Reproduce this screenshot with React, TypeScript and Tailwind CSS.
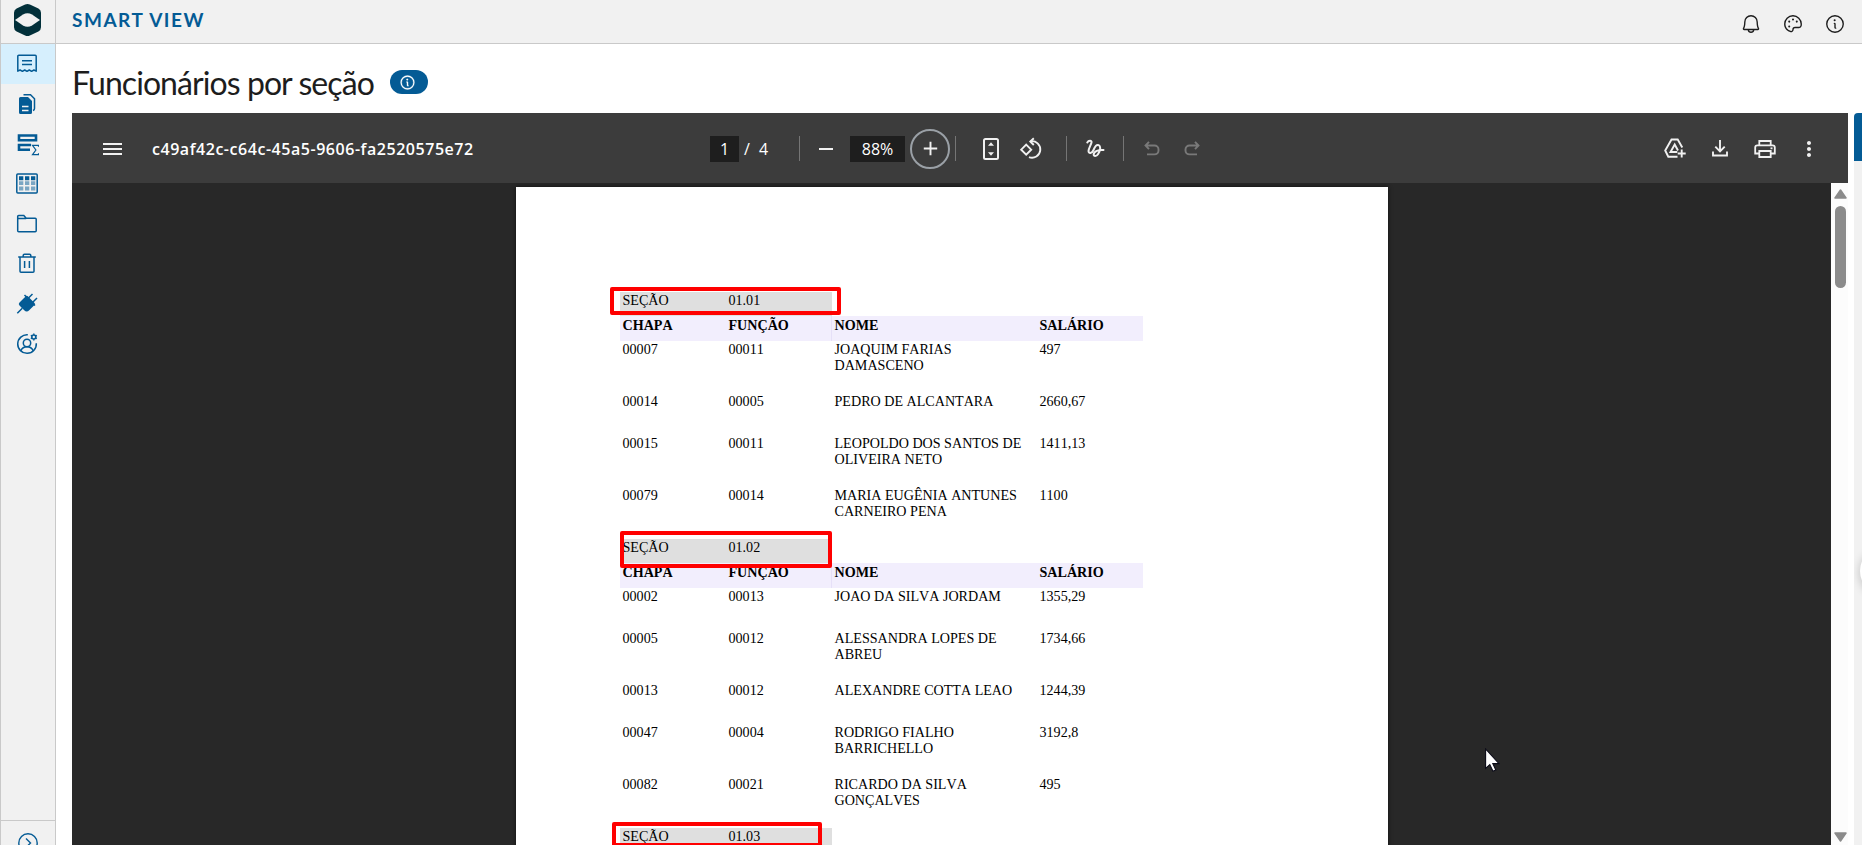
import type { ReactNode } from 'react'
import { MdAdd, MdMoreVert, MdRemove } from 'react-icons/md'
import { PiBell, PiInfo, PiPalette } from 'react-icons/pi'

type Employee = {
  id: string
  role: string
  name: string[]
  salary: string
}

type Section = {
  code: string
  employees: Employee[]
}

const sections: Section[] = [
  {
    code: '01.01',
    employees: [
      { id: '00007', role: '00011', name: ['JOAQUIM FARIAS', 'DAMASCENO'], salary: '497' },
      { id: '00014', role: '00005', name: ['PEDRO DE ALCANTARA'], salary: '2660,67' },
      { id: '00015', role: '00011', name: ['LEOPOLDO DOS SANTOS DE', 'OLIVEIRA NETO'], salary: '1411,13' },
      { id: '00079', role: '00014', name: ['MARIA EUGÊNIA ANTUNES', 'CARNEIRO PENA'], salary: '1100' },
    ],
  },
  {
    code: '01.02',
    employees: [
      { id: '00002', role: '00013', name: ['JOAO DA SILVA JORDAM'], salary: '1355,29' },
      { id: '00005', role: '00012', name: ['ALESSANDRA LOPES DE', 'ABREU'], salary: '1734,66' },
      { id: '00013', role: '00012', name: ['ALEXANDRE COTTA LEAO'], salary: '1244,39' },
      { id: '00047', role: '00004', name: ['RODRIGO FIALHO', 'BARRICHELLO'], salary: '3192,8' },
      { id: '00082', role: '00021', name: ['RICARDO DA SILVA', 'GONÇALVES'], salary: '495' },
    ],
  },
  { code: '01.03', employees: [] },
]

const Icon = ({ size = 24, children }: { size?: number; children: ReactNode }) => (
  <svg width={size} height={size} viewBox="0 0 24 24" fill="none" stroke="currentColor" strokeWidth="1.5" className="shrink-0">
    {children}
  </svg>
)

const sidebarIcons: ReactNode[] = [
  <Icon key="report">
    <path d="M2.800 19.200V4.300a1 1 0 0 1 1-1h16.400a1 1 0 0 1 1 1v14.900l-2.300-1.200-2.300 1.300-2.300-1.300-2.300 1.300-2.300-1.300-2.300 1.300-2.300-1.300z" strokeLinejoin="round" />
    <path d="M7 8.800h10M7 12.500h10" />
  </Icon>,
  <Icon key="files">
    <path d="M4 6.500a1.500 1.500 0 0 1 1.500-1.500H13l4 4v11.500a1.500 1.500 0 0 1-1.500 1.500h-10A1.500 1.500 0 0 1 4 20.500z" fill="currentColor" stroke="none" />
    <path d="M7 14.500h6.500M7 18.500h6.500" stroke="#f1f1f1" />
    <path d="M8.500 2.800H15.500l4 4v9.700a2 2 0 0 1-1.500 2" />
  </Icon>,
  <Icon key="totals">
    <path d="M4 3.500h17v4.700H4zM16 13H4v4.700h11" strokeWidth="2.600" />
    <path d="M23.500 14.800v-1.400h-6l3.400 4.600-3.400 4.600h6v-1.400" strokeWidth="1.200" />
  </Icon>,
  <Icon key="table">
    <rect x="1.800" y="2" width="20.400" height="19" rx="1" />
    <path d="M4 6.200h4.300M10 6.200h4.300M16 6.200h4.300" strokeWidth="4" />
    <path d="M4 11.200h4.300M10 11.200h4.300M16 11.200h4.300M4 16.500h4.300M10 16.500h4.300M16 16.500h4.300" strokeWidth="3.800" opacity=".5" />
  </Icon>,
  <Icon key="folder">
    <path d="M2.700 18.800V4.500a1 1 0 0 1 1-1h5.100l2.400 2.800h9a1 1 0 0 1 1 1v11.500a1 1 0 0 1-1 1H3.700a1 1 0 0 1-1-1zM2.700 6.500h8.500" />
  </Icon>,
  <Icon key="trash">
    <path d="M3.200 5h17.600M5 5v14.200a1 1 0 0 0 1 1h12a1 1 0 0 0 1-1V5M8.200 5V3.500a1.300 1.300 0 0 1 1.300-1.300h5A1.300 1.300 0 0 1 15.800 3.500v1.500M9.600 9v7M14.400 9v7" />
  </Icon>,
  <Icon key="plug">
    <path d="M4.500 10.500l6.300-6.300a1.500 1.500 0 0 1 2 0l6.700 6.700a1.500 1.500 0 0 1 0 2l-5.300 5.300a3.500 3.500 0 0 1-5 0l-4.700-4.700a2.100 2.100 0 0 1 0-3z" fill="currentColor" stroke="none" />
    <path d="M2.300 21.300l5-5M13.500 6l4-4M17.500 10.500L22 6M9.500 3l10.500 10.500" strokeWidth="1.500" />
  </Icon>,
  <Icon key="user">
    <path d="M12.800 2.800a9.300 9.300 0 1 0 8.500 8.500" />
    <circle cx="12" cy="11" r="3.700" />
    <path d="M5.700 18.800a7 7 0 0 1 12.600 0" />
    <circle cx="18.800" cy="5" r="2" strokeWidth="1.600" />
    <path d="M18.800 1.500v1.300M18.800 7.200v1.300M15.800 3.300l1.100.6M20.700 6.100l1.100.6M15.800 6.700l1.100-.6M20.700 3.900l1.100-.6" strokeWidth="1.400" />
  </Icon>,
]

const Sidebar = () => (
  <aside className="flex w-14 shrink-0 flex-col border-x border-[#c9c9c9] bg-[#f1f1f1] text-[#045b95]">
    <div className="flex h-11 shrink-0 justify-center border-b border-[#c9c9c9] pt-1">
      <svg width="27" height="32" viewBox="0 0 27 32" className="mr-[2px]">
        <path d="M13.500 0q1.200 0 2.400.6l8.500 4Q27 6 27 8.800v14.400q0 2.800-2.600 4.200l-8.500 4q-2.400 1.200-4.800 0l-8.500-4Q0 26 0 23.200V8.800Q0 6 2.600 4.600l8.500-4Q12.300 0 13.500 0z" fill="#02303a" />
        <path d="M1 16l8-5.500q4.500-2.600 9 0L26 16l-8 5.500q-4.500 2.600-9 0z" fill="#f1f1f1" />
      </svg>
    </div>
    {sidebarIcons.map((icon, i) => (
      <button key={i} className={`flex h-10 shrink-0 items-center justify-center pr-[2px] ${i === 0 ? 'bg-[#d6effd]' : ''}`}>
        {icon}
      </button>
    ))}
    <div className="mt-auto flex h-[25px] shrink-0 justify-center overflow-hidden border-t border-[#c9c9c9] pt-3">
      <svg width="20" height="20" viewBox="0 0 20 20" fill="none" stroke="currentColor" strokeWidth="1.400" className="shrink-0">
        <circle cx="10" cy="10" r="9.200" />
        <path d="M8 5.500l4.500 4.500L8 14.500" />
      </svg>
    </div>
  </aside>
)

const Divider = ({ className }: { className: string }) => <div className={`h-[25px] w-px bg-[#757575] ${className}`} />

const Toolbar = () => (
  <div className="flex h-[70px] shrink-0 items-center bg-[#3c3c3c] pt-px font-['Open_Sans',sans-serif] text-[#f1f1f1]">
    <div className="flex w-[638px] items-center pl-[31px]">
      <svg width="19" height="12" viewBox="0 0 19 12" className="shrink-0">
        <path d="M0 1h19M0 6h19M0 11h19" stroke="currentColor" strokeWidth="1.800" />
      </svg>
      <p className="ml-[30px] text-base font-semibold tracking-[0.54px] whitespace-nowrap text-white">c49af42c-c64c-45a5-9606-fa2520575e72</p>
    </div>
    <div className="flex h-[26px] w-[29px] items-center justify-center bg-[#1e1e1e] text-base text-white">1</div>
    <p className="ml-[5px] w-[15px] text-base text-white">/</p>
    <p className="w-[20px] text-base text-white">4</p>
    <Divider className="ml-[20px]" />
    <MdRemove size={24} className="ml-[14px]" />
    <div className="ml-[12px] flex h-[26px] w-[55px] items-center justify-center bg-[#1e1e1e] text-base text-white">88%</div>
    <button className="ml-[5px] flex h-[40px] w-[40px] shrink-0 items-center justify-center rounded-full border-2 border-[#9aa0a6]">
      <MdAdd size={23} />
    </button>
    <Divider className="ml-[5px]" />
    <svg width="16" height="22" viewBox="0 0 16 22" className="ml-[27px]">
      <rect x="1" y="1" width="14" height="20" rx="1.500" fill="none" stroke="currentColor" strokeWidth="2" />
      <path d="M8 4.200l3 3.500H5zM8 17.800l3-3.500H5z" fill="currentColor" />
    </svg>
    <svg width="24" height="24" viewBox="0 0 24 24" className="ml-[20px]" fill="none" stroke="currentColor" strokeWidth="1.900">
      <path d="M7.200 7.700l5 5-5 5-5-5z" />
      <path d="M11.500 4.300a8.300 8.300 0 1 1-1.500 15.900" />
      <path d="M14.800 1.300L11.300 4.500l3.500 3.500" />
    </svg>
    <Divider className="ml-[23px]" />
    <svg width="19" height="20" viewBox="0 0 19 20" className="ml-[19px]" fill="none" stroke="currentColor" strokeWidth="2" strokeLinecap="round">
      <path d="M1.300 3.500C2.500 1.500 6 1 5.500 3.500 5 6 2.500 9.500 2.500 12c0 3 3.500 2.500 5-1C9 7.500 10.500 5.200 12.700 6.200c2.500 1.200 1.500 6-.7 9-1.500 2.200-4.500 2.300-4.300 0C8 12.300 12.500 10.500 17.500 11" />
    </svg>
    <Divider className="ml-[18px]" />
    <svg width="16" height="15" viewBox="0 0 16 15" className="ml-[20px] text-[#797979]" fill="none" stroke="currentColor" strokeWidth="1.900">
      <path d="M5 .8L1.500 4.500 5 8.200M1.500 4.500H10.500a4 4 0 0 1 4 4v.9a4 4 0 0 1-4 4H3" />
    </svg>
    <svg width="16" height="15" viewBox="0 0 16 15" className="ml-[24px] text-[#797979]" fill="none" stroke="currentColor" strokeWidth="1.900">
      <path d="M11 .8l3.500 3.700L11 8.200M14.500 4.500H5.500a4 4 0 0 0-4 4v.9a4 4 0 0 0 4 4H13" />
    </svg>
    <div className="ml-auto flex items-center pr-[27px]">
      <svg width="23" height="21" viewBox="0 0 23 21" fill="none" stroke="currentColor" strokeWidth="1.900">
        <path d="M18.300 9.500L13.700 1.500H7.500L1.200 12.500l3.100 6.200H13.500" />
        <path d="M13.300 14H6.500l4.200-7.500 3.300 6" />
        <path d="M17.700 11.500v8M13.700 15.500h8" />
      </svg>
      <svg width="16" height="17" viewBox="0 0 16 17" className="ml-[25px]" fill="none" stroke="currentColor" strokeWidth="1.900">
        <path d="M8 0v11M3.300 6.700L8 11.400l4.700-4.700M1 11.500v4h14v-4" />
      </svg>
      <svg width="22" height="18" viewBox="0 0 22 18" className="ml-[26px]" fill="none" stroke="currentColor" strokeWidth="1.800">
        <path d="M5.300 5V1h11.400v4M5.300 13.500H1.200V7.500Q1.200 5.300 3.400 5.300h15.200q2.200 0 2.200 2.200v6h-4.100M5.300 11h11.400v6H5.300z" />
        <path d="M16.500 8.300h2" />
      </svg>
      <MdMoreVert size={24} className="ml-[21px]" />
    </div>
  </div>
)

const columns = 'grid grid-cols-[106px_106px_205px_106px] [&>*]:pl-[2.5px]'

const Report = () => (
  <div className="w-[523px] font-['Liberation_Serif',serif] text-[14.1px] leading-4 text-black [font-kerning:none]">
    {sections.map((section) => (
      <section key={section.code}>
        <div className="grid h-6 w-[212px] grid-cols-2 bg-[#dfdfdf] [&>*]:pl-[2.5px]">
          <p>SEÇÃO</p>
          <p>{section.code}</p>
        </div>
        {section.employees.length > 0 && (
          <div className={`${columns} h-[25px] bg-[#f2eefd] font-bold [&>*]:pt-px`}>
            <p>CHAPA</p>
            <p className="border-r border-[#e6e0f8]">FUNÇÃO</p>
            <p>NOME</p>
            <p>SALÁRIO</p>
          </div>
        )}
        {section.employees.map((employee) => (
          <div key={employee.id} className={`${columns} ${employee.name.length > 1 ? 'h-[52px]' : 'h-[42px]'}`}>
            <p>{employee.id}</p>
            <p>{employee.role}</p>
            <div className="whitespace-nowrap">
              {employee.name.map((line) => (
                <p key={line}>{line}</p>
              ))}
            </div>
            <p>{employee.salary}</p>
          </div>
        ))}
      </section>
    ))}
  </div>
)

const Scrollbar = () => (
  <div className="flex w-[17px] flex-col items-center bg-[#fcfcfc] pt-[6px] pl-[2px]">
    <svg width="13" height="10" viewBox="0 0 13 10" className="shrink-0">
      <path d="M6.500 1L12 9H1z" fill="#8b8b8b" stroke="#8b8b8b" strokeWidth="1.500" strokeLinejoin="round" />
    </svg>
    <div className="mt-[7px] h-[82px] w-[11px] shrink-0 rounded-full bg-[#8b8b8b]" />
    <svg width="13" height="10" viewBox="0 0 13 10" className="mt-auto mb-[3px] shrink-0">
      <path d="M6.500 9L12 1H1z" fill="#8b8b8b" stroke="#8b8b8b" strokeWidth="1.500" strokeLinejoin="round" />
    </svg>
  </div>
)

const Viewer = () => (
  <div className="flex w-[1776px] shrink-0 flex-col">
    <Toolbar />
    <div className="flex min-h-0 flex-1 bg-[#282828]">
      <div className="flex flex-1 overflow-hidden pt-1 pl-[444px]">
        <div className="relative h-[1233px] w-[872px] bg-white pt-[105px] pl-[104px] shadow-[0_0_4px_#111]">
          <Report />
          {/* highlights */}
          <div className="absolute top-[100px] left-[94px] h-[28px] w-[231px] rounded-[2px] border-4 border-[#ff0000]" />
          <div className="absolute top-[344px] left-[104px] h-[37px] w-[212px] rounded-[2px] border-4 border-[#ff0000]" />
          <div className="absolute top-[635px] left-[96px] h-[25px] w-[210px] rounded-[2px] border-4 border-[#ff0000]" />
        </div>
      </div>
      <Scrollbar />
    </div>
  </div>
)

export default function App() {
  return (
    <div className="relative flex h-[845px] w-[1862px] overflow-hidden bg-white font-['Lato',sans-serif]">
      <Sidebar />
      <div className="flex min-w-0 flex-1 flex-col">
        <header className="flex h-11 shrink-0 items-center justify-between border-b border-[#c9c9c9] bg-[#f1f1f1] pr-[16px] pl-4">
          <h1 className="mb-[3px] text-[19px] font-bold tracking-[1.5px] text-[#045b95]">SMART VIEW</h1>
          <div className="flex items-center gap-5 pt-1 text-[#1d1d1d]">
            <PiBell size={22} />
            <PiPalette size={22} />
            <PiInfo size={22} />
          </div>
        </header>
        <div className="flex h-[69px] shrink-0 items-center pl-4">
          <h2 className="mt-[8px] text-[32px] leading-10 tracking-[-0.93px] whitespace-nowrap text-[#1d1d1d]">Funcionários por seção</h2>
          <div className="mt-[7px] ml-[16px] flex h-6 w-[38px] items-center rounded-full bg-[#045b95] pl-[9px] text-white">
            <PiInfo size={17} strokeWidth={5} />
          </div>
        </div>
        <div className="flex min-h-0 flex-1 pl-4">
          <Viewer />
          <div className="ml-[6px] flex-1 overflow-hidden rounded-tl bg-[#f1f1f1]">
            <div className="h-12 bg-[#045b95]" />
            <div className="mt-[386px] ml-[6px] h-12 w-12 rounded-full bg-white shadow-[0_2px_10px_#0003]" />
          </div>
        </div>
      </div>
      <svg width="15" height="24" viewBox="0 0 15 24" className="absolute top-[748px] left-[1485px]">
        <path d="M.6 1v19.300l4.200-3.700 3.200 6.600 2.800-1.300-3-6.300h6.200z" fill="#fff" stroke="#0b0b18" strokeWidth="1.100" />
      </svg>
    </div>
  )
}
